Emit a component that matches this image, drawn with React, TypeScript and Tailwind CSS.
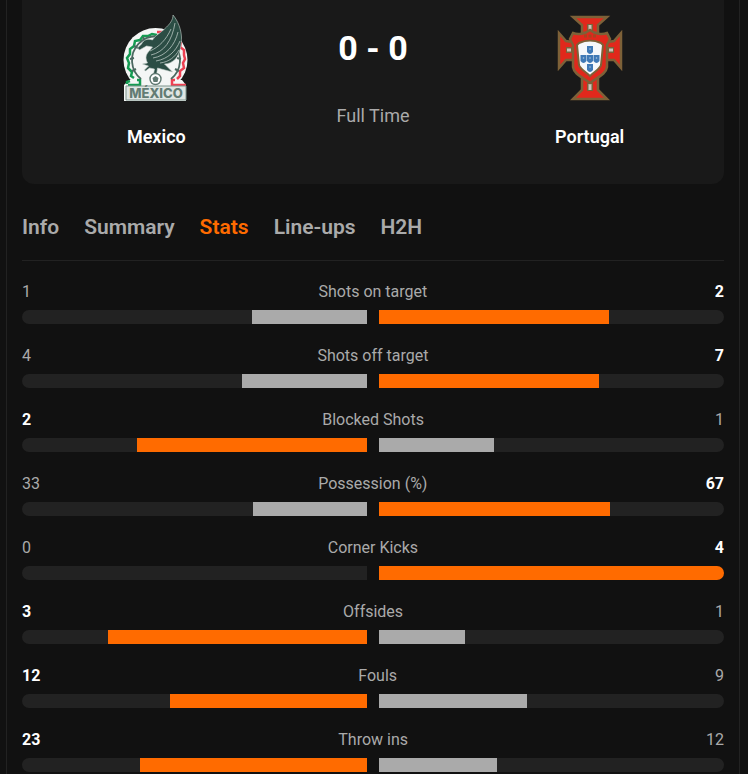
import React from "react";

type Stat = { label: string; home: number; away: number };

const stats: Stat[] = [
  { label: "Shots on target", home: 1, away: 2 },
  { label: "Shots off target", home: 4, away: 7 },
  { label: "Blocked Shots", home: 2, away: 1 },
  { label: "Possession (%)", home: 33, away: 67 },
  { label: "Corner Kicks", home: 0, away: 4 },
  { label: "Offsides", home: 3, away: 1 },
  { label: "Fouls", home: 12, away: 9 },
  { label: "Throw ins", home: 23, away: 12 },
];

const tabs = ["Info", "Summary", "Stats", "Line-ups", "H2H"];

const MexicoCrest: React.FC = () => (
  <svg viewBox="0 0 88 88" className="h-22 w-22" role="img" aria-label="Mexico crest">
    <circle cx="43.5" cy="46" r="32" fill="#f4f6f5" />
    <path d="M17 66h53l4 5v16H12V71z" fill="#f4f6f5" />
    {/* ring */}
    <path
      d="M15 70v-2l3-1M16 71h12v-5h-3M22 64l-3-2 1-4-4-4 1-5-2-5 3-4 0-5 4-3 1-5 5-1 3-4 5 0 4-2 5 1"
      fill="none"
      stroke="#159b52"
      strokeWidth="2.5"
    />
    <path
      d="M45 18h5l3 2M69 28l-1 5 4 3 0 5 1 4-2 4 1 5-4 3 0 5-3 3M74 71H60v-5h3"
      fill="none"
      stroke="#ee4052"
      strokeWidth="2.5"
    />
    <path d="M29 65a24 24 0 1 1 30 0" fill="none" stroke="#4b6860" strokeWidth="1.8" />
    <path d="M18 45l4-1M22 32l4 2M31 23l2 4M20 57l4-2M69 45l-4-1M67 57l-4-2" stroke="#4b6860" strokeWidth="2" />
    {/* eagle */}
    <path
      d="M61 1c5 6 8 14 8.500 22 0 7-1 16-6 22-3 3-7 5-11 5l8 8-15-4-1 7-3-1 1-5-5-1-4 3-1-1 4-4-6-2 5-1c-2-4-2-7 0-10l5-6-6-1-7 4-2-2 4-4c2-4 6-6 11-4 3-5 8-7 12-11C58 10 61 6 61 1z"
      fill="#2b4d44"
      stroke="#c5d0cb"
      strokeWidth=".6"
    />
    <path
      d="M39 41c13-3 21-14 24-32M41 44c13-2 22-13 25-26M44 47c12-2 20-10 24-20M48 49c9-1 15-6 19-13M38 37c9-4 16-11 21-22"
      fill="none"
      stroke="#a9b9b3"
      strokeWidth=".9"
    />
    <circle cx="43.500" cy="65" r="5.500" fill="#fff" stroke="#5f7870" strokeWidth="1.400" />
    <path d="M43.500 62l3 2-1 4h-4l-1-4z" fill="#5f7870" />
    <path d="M14 72h60v14H14z" fill="#dfe6e3" stroke="#7f958d" strokeWidth="1" />
    <text x="44" y="84" textAnchor="middle" className="font-['Inter',sans-serif] font-extrabold" fontSize="13" fill="#637c74">
      MÉXICO
    </text>
  </svg>
);

const PortugalCrest: React.FC = () => (
  <svg viewBox="0 0 88 88" className="h-22 w-22" role="img" aria-label="Portugal crest">
    <path
      d="M27 3h34l-9 8v17h10l6-1 7-8v35l-7-8H52v30l9 9H27l9-9V46H20l-7 8V19l7 8 6 1h10V11z"
      fill="#e1281c"
      stroke="#7d6138"
      strokeWidth="2.5"
    />
    <path d="M44 10v8M44 69v8M20 36h7M61 36h7" stroke="#7d6138" strokeWidth="6" />
    <path d="M44 11v6M44 70v6M21 36h4M63 36h4" stroke="#c9c5be" strokeWidth="3" />
    <path
      d="M44 16c5 4 12 5 17 3l3 6-3 6v22c-1 7-9 10-17 16-8-6-16-9-17-16V31l-3-6 3-6c5 2 12 1 17-3z"
      fill="#e1281c"
      stroke="#7d6138"
      strokeWidth="2.5"
    />
    <path d="M38 22h3M42.500 22h3M47 22h3" stroke="#a8431f" strokeWidth="3" />
    <path
      d="M33 29q11-5 22 0l2 2-2 20c-1 4-6 6-11 11-5-5-10-7-11-11l-2-20z"
      fill="#f5f8fb"
      stroke="#7d6138"
      strokeWidth="2"
    />
    <g fill="#3f79b6">
      <path d="M41 32h6v6q-3 4-6 0z" />
      <path d="M41 41h6v6q-3 4-6 0z" />
      <path d="M41 50h6v6q-3 4-6 0z" />
      <path d="M34.500 41h6v6q-3 4-6 0z" />
      <path d="M47.500 41h6v6q-3 4-6 0z" />
    </g>
    <g fill="#a9c6e2">
      <circle cx="44" cy="35" r=".8" />
      <circle cx="44" cy="44" r=".8" />
      <circle cx="44" cy="53" r=".8" />
      <circle cx="37.500" cy="44" r=".8" />
      <circle cx="50.500" cy="44" r=".8" />
    </g>
  </svg>
);

const Team: React.FC<{ name: string; children: React.ReactNode }> = ({ name, children }) => (
  <div className="flex flex-1 flex-col items-center">
    {children}
    <h2 className="mt-[21px] text-lg leading-7 font-semibold text-white">{name}</h2>
  </div>
);

const StatRow: React.FC<Stat> = ({ label, home, away }) => {
  const total = home + away;
  const homeLeads = home > away;

  return (
    <li>
      <div className="flex items-center justify-between text-base">
        <span className={homeLeads ? "font-bold text-white" : ""}>{home}</span>
        <span>{label}</span>
        <span className={homeLeads ? "" : "font-bold text-white"}>{away}</span>
      </div>
      <div className="mt-1.5 grid grid-cols-2 gap-3">
        <div className="flex h-3.5 justify-end overflow-hidden rounded-l-full bg-[#222222]">
          <div className={homeLeads ? "bg-[#ff6b00]" : "bg-[#aaaaaa]"} style={{ width: `${(home / total) * 100}%` }} />
        </div>
        <div className="flex h-3.5 overflow-hidden rounded-r-full bg-[#222222]">
          <div className={homeLeads ? "bg-[#aaaaaa]" : "bg-[#ff6b00]"} style={{ width: `${(away / total) * 100}%` }} />
        </div>
      </div>
    </li>
  );
};

const App: React.FC = () => {
  return (
    <div className="min-h-screen bg-[#111111] pr-2 pl-1.5 font-['Roboto',sans-serif] text-[#aaaaaa]">
      <main className="min-h-screen border-x border-[#222222] px-[15px]">
        <section className="flex items-start rounded-b-xl bg-[#191919] px-[26px] pt-3.5 pb-[33px]">
          <Team name="Mexico">
            <MexicoCrest />
          </Team>
          <div className="flex flex-1 flex-col items-center pt-3.5">
            <p className="text-[34px] leading-10 font-bold text-white">0 - 0</p>
            <p className="mt-[34px] text-lg leading-7">Full Time</p>
          </div>
          <Team name="Portugal">
            <PortugalCrest />
          </Team>
        </section>

        <nav className="flex gap-[25px] border-b border-[#222222] pt-[29px] pb-[19px] text-[21px] leading-7 font-semibold">
          {tabs.map((tab) => (
            <a key={tab} href="#" className={tab === "Stats" ? "text-[#ff6b00]" : "hover:text-white"}>
              {tab}
            </a>
          ))}
        </nav>

        <ul className="space-y-5 pt-[19px]">
          {stats.map((stat) => (
            <StatRow key={stat.label} {...stat} />
          ))}
        </ul>
      </main>
    </div>
  );
};

export default App;
